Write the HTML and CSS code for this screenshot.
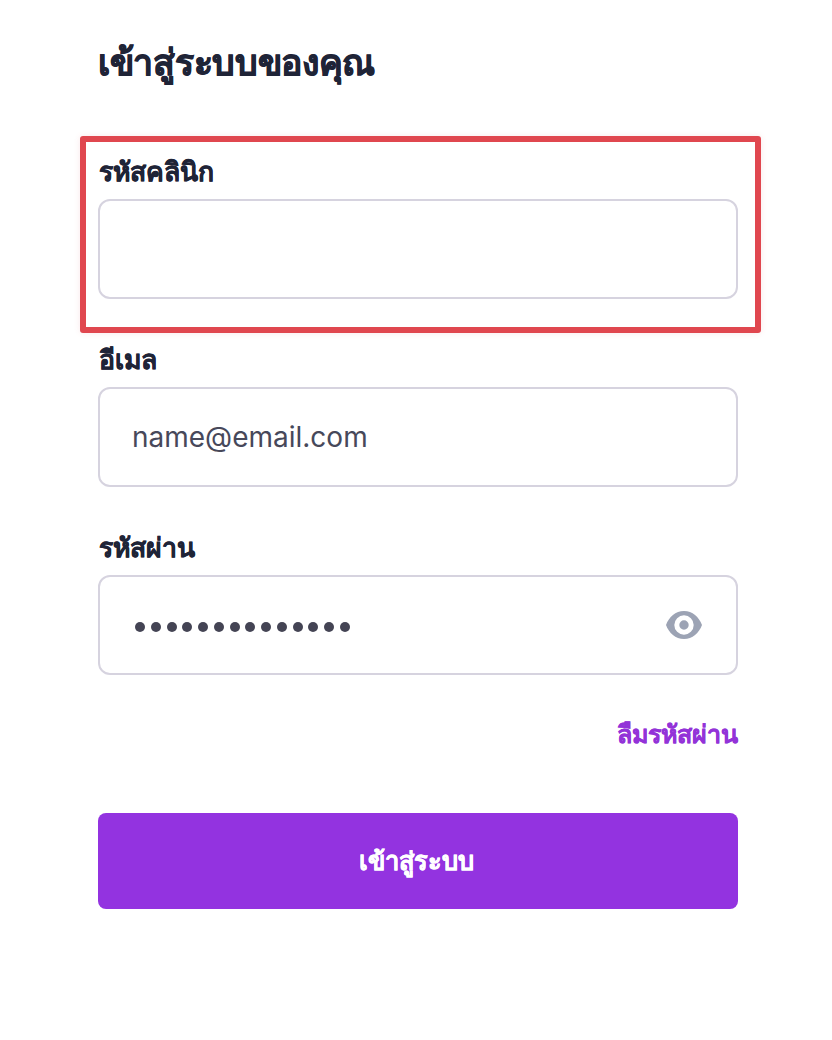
FILE: index.html
```html
<!DOCTYPE html>
<html lang="th">
<head>
<meta charset="utf-8">
<title>เข้าสู่ระบบ</title>
<link rel="stylesheet" href="styles.css">
</head>
<body>
<main class="page">
  <h1 class="title">เข้าสู่ระบบของคุณ</h1>
  <form class="form">
    <div class="field field-highlight">
      <label class="label">รหัสคลินิก</label>
      <div class="input"></div>
    </div>
    <div class="field">
      <label class="label">อีเมล</label>
      <div class="input"><span class="value">name@email.com</span></div>
    </div>
    <div class="field">
      <label class="label">รหัสผ่าน</label>
      <div class="input">
        <span class="dots"><i></i><i></i><i></i><i></i><i></i><i></i><i></i><i></i><i></i><i></i><i></i><i></i><i></i><i></i></span>
        <svg class="eye" viewBox="0 0 36 28" width="36" height="28"><path fill="#9ca3b4" fill-rule="evenodd" d="M18 0C9.500 0 3 6 0 14c3 8 9.500 14 18 14s15-6 18-14C33 6 26.500 0 18 0zm0 4.300a9.700 9.700 0 1 1 0 19.400 9.700 9.700 0 0 1 0-19.400zm0 5a4.700 4.700 0 1 0 0 9.400 4.700 4.700 0 0 0 0-9.400z"/></svg>
      </div>
    </div>
    <div class="forgot-row"><a class="forgot">ลืมรหัสผ่าน</a></div>
    <button class="submit" type="button">เข้าสู่ระบบ</button>
  </form>
</main>
</body>
</html>
```

FILE: styles.css
```css
*, *::before { box-sizing: border-box; }
html, body { margin: 0; background: #fff; }
body { font-family: "Noto Sans", "Inter", "Liberation Sans", sans-serif; color: #1f2437; }
.page { width: 832px; height: 1040px; padding: 38px 94px 0 98px; overflow: hidden; }
.title { margin: 0; font-size: 35.600px; line-height: 46px; font-weight: 700; color: #1f2437; letter-spacing: -0.3px; -webkit-text-stroke: 0.7px #1f2437; }
.form { margin-top: 59px; display: flex; flex-direction: column; }
.field { height: 188px; padding-top: 14px; position: relative; }
.field-highlight::before { content: ""; position: absolute; left: -18px; right: -23px; top: -7px; height: 197px; border: 6px solid #e0474f; border-radius: 3px; box-shadow: 0 0 6px rgba(226, 71, 79, 0.12); }
.label { display: block; height: 42px; font-size: 26.500px; line-height: 28px; font-weight: 700; color: #1f2437; -webkit-text-stroke: 0.4px #1f2437; padding-left: 1px; }
.input { height: 100px; border: 2px solid #d6d3df; border-radius: 12px; background: #fff; display: flex; align-items: center; justify-content: space-between; padding: 0 34px 0 32px; }
.value { font-family: "Inter", "Noto Sans", sans-serif; font-size: 28px; color: #47485a; }
.dots { display: flex; gap: 5.750px; padding: 3px 0 0 3px; }
.dots i { width: 10px; height: 10px; border-radius: 50%; background: #444454; }
.forgot-row { display: flex; justify-content: flex-end; margin-top: 6px; }
.forgot { font-size: 25px; line-height: 40px; font-weight: 700; color: #9333d8; -webkit-text-stroke: 0.3px #9333d8; }
.submit { margin-top: 60px; height: 96px; width: 100%; border: 0; border-radius: 8px; background: #9333e0; color: #fff; font-family: inherit; font-size: 25.400px; font-weight: 700; -webkit-text-stroke: 0.3px #fff; padding: 0 4px 0 0; }
```
